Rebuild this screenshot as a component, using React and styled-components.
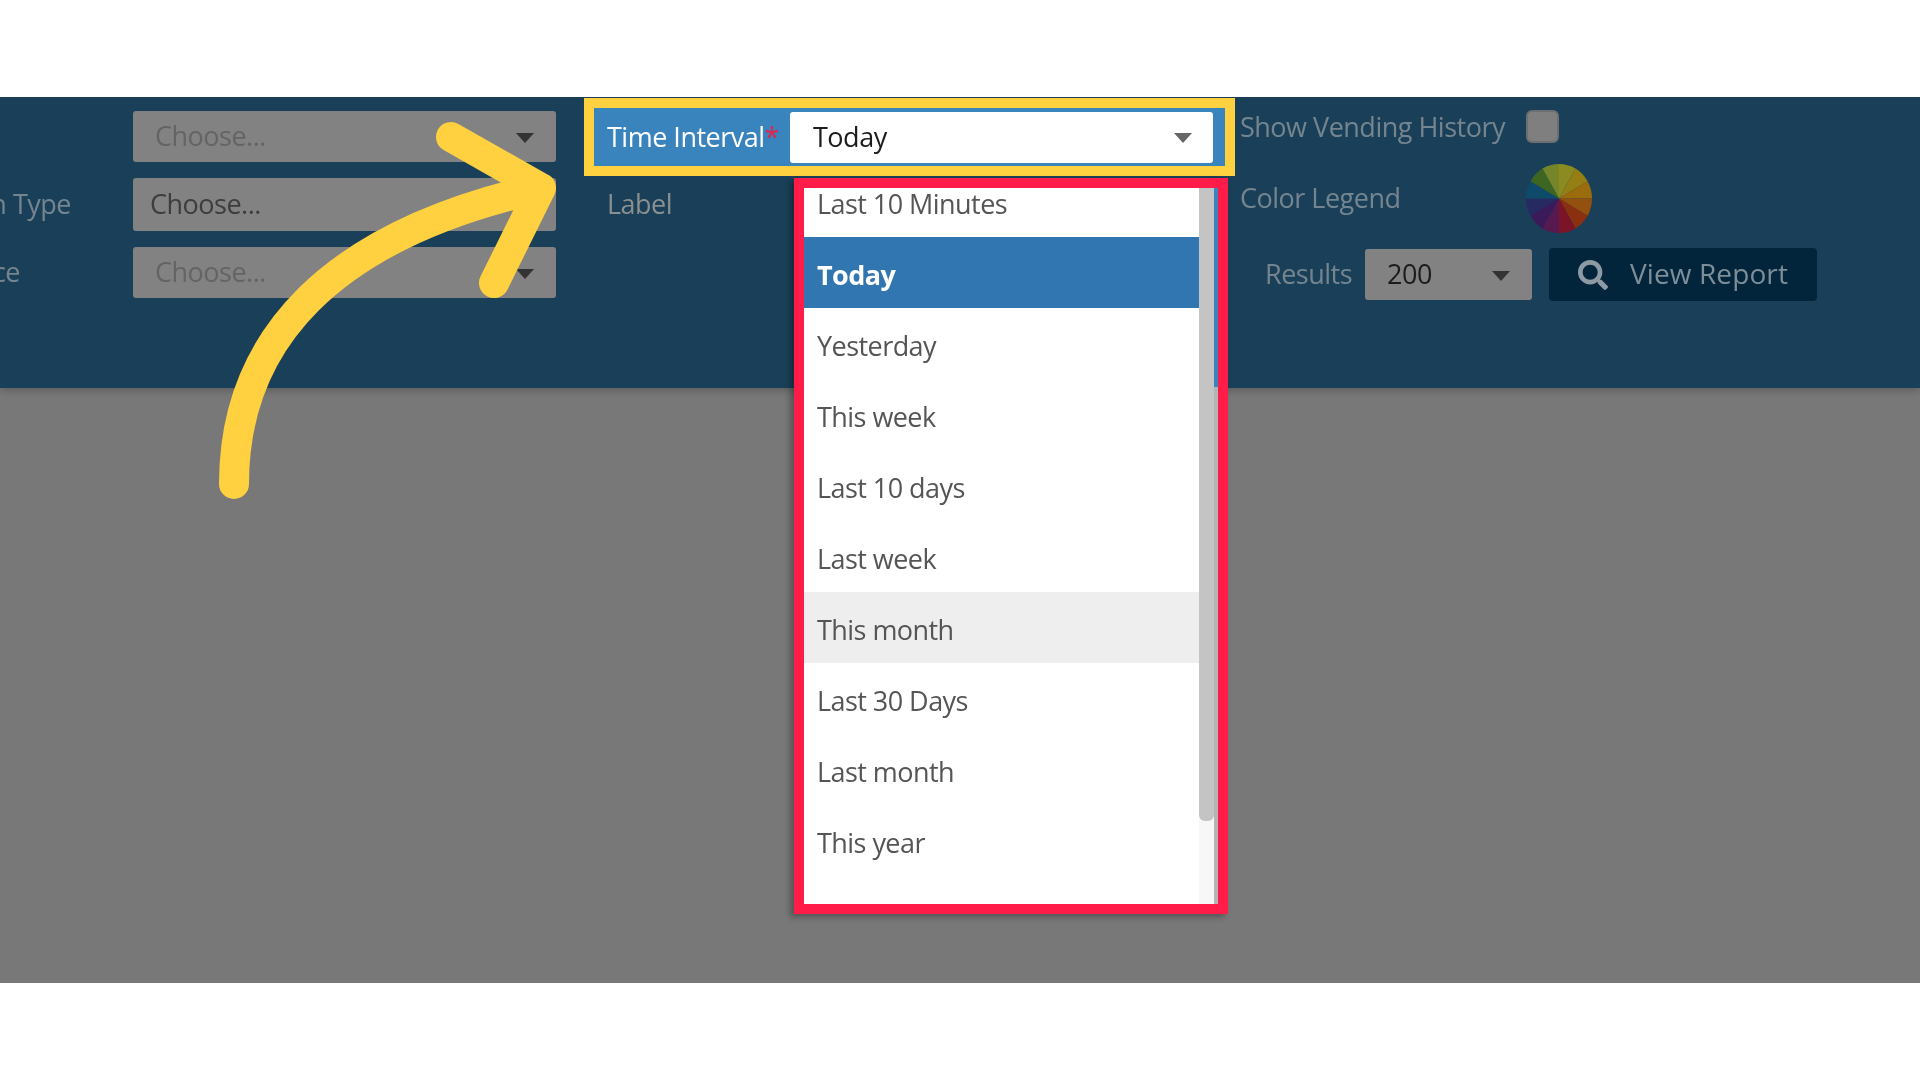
import styled, { createGlobalStyle, css } from "styled-components";
import { FaSearch } from "react-icons/fa";

const GlobalStyle = createGlobalStyle`
  html, body {
    margin: 0;
    padding: 0;
    background: #ffffff;
    font-family: "Open Sans", "Noto Sans", sans-serif;
  }
`;

const OPTIONS = [
  "Last 10 Minutes",
  "Today",
  "Yesterday",
  "This week",
  "Last 10 days",
  "Last week",
  "This month",
  "Last 30 Days",
  "Last month",
  "This year",
  "Custom",
];

const WHEEL = [
  "#8b8b22", "#957f14", "#9a6c0e", "#93500e", "#8a3010", "#7a1426",
  "#561a50", "#3a1a58", "#262a60", "#0e4a6a", "#3c6622", "#75852a",
];

function wedge(i) {
  const step = (Math.PI * 2) / WHEEL.length;
  const a = i * step - Math.PI / 2;
  const b = a + step;
  const p = (t) => `${(33 + 33 * Math.cos(t)).toFixed(2)} ${(33 + 33 * Math.sin(t)).toFixed(2)}`;
  return `M33 33L${p(a)}A33 33 0 0 1 ${p(b)}Z`;
}

function ColorWheel() {
  return (
    <WheelSvg viewBox="0 0 66 66" preserveAspectRatio="none">
      {WHEEL.map((c, i) => (
        <path key={c} d={wedge(i)} fill={c} />
      ))}
    </WheelSvg>
  );
}

function App() {
  return (
    <>
      <GlobalStyle />
      <Stage>
        <Header>
          <LeftColumn>
            <Row>
              <FieldLabel />
              <Select $h={51}>
                <SelectText $pad={22} $dim>Choose...</SelectText>
                <Caret $right={31} />
              </Select>
            </Row>
            <Row>
              <FieldLabel $end={62}>Transaction Type</FieldLabel>
              <Select $h={53}>
                <SelectText $pad={17}>Choose...</SelectText>
              </Select>
            </Row>
            <Row>
              <FieldLabel $end={113}>Device</FieldLabel>
              <Select $h={51}>
                <SelectText $pad={22} $dim>Choose...</SelectText>
                <Caret $right={31} />
              </Select>
            </Row>
          </LeftColumn>

          <MiddleColumn>
            <Highlight>
              <IntervalLabel>
                Time Interval<Required>*</Required>
              </IntervalLabel>
              <IntervalSelect>
                <SelectText $pad={23} $strong>Today</SelectText>
                <Caret $right={30} $light />
              </IntervalSelect>
            </Highlight>
            <PlainLabel>Label</PlainLabel>
          </MiddleColumn>

          <RightColumn>
            <OptionRow $h={57}>
              <OptionLabel>Show Vending History</OptionLabel>
              <Checkbox />
            </OptionRow>
            <OptionRow $h={85}>
              <OptionLabel>Color Legend</OptionLabel>
              <ColorWheel />
            </OptionRow>
            <ResultsRow>
              <ResultsLabel>Results</ResultsLabel>
              <Select $h={51} $w={167}>
                <SelectText $pad={22} $strong>200</SelectText>
                <Caret $right={31} />
              </Select>
              <ReportButton>
                <FaSearch size={30} />
                <span>View Report</span>
              </ReportButton>
            </ResultsRow>
          </RightColumn>
        </Header>

        <Menu>
          <MenuList>
            {OPTIONS.map((o) => (
              <MenuItem key={o} $active={o === "Today"} $hover={o === "This month"}>
                <span>{o}</span>
              </MenuItem>
            ))}
          </MenuList>
          <ScrollTrack>
            <ScrollThumb />
          </ScrollTrack>
          <Gutter />
        </Menu>

        <Arrow viewBox="0 0 600 420" fill="none">
          <path
            d="M234 387C234 243 330 138 541 91M451 40L541 91L494 186"
            stroke="#ffd040"
            strokeWidth="30"
            strokeLinecap="round"
            strokeLinejoin="round"
          />
        </Arrow>
      </Stage>
    </>
  );
}

export default App;

// the reference is an upscaled capture, so its text is a little soft
const uiText = css`
  font-size: 27px;
  letter-spacing: -0.5px;
  white-space: nowrap;
  filter: blur(0.5px);
`;

const Stage = styled.div`
  position: relative;
  margin-top: 97px;
  height: 886px;
  overflow: hidden;
  background: #787878;
  margin-bottom: 97px;
`;

const Header = styled.header`
  display: flex;
  height: 291px;
  background: #1a4059;
  box-shadow: 0 2px 8px rgba(0, 0, 0, 0.25);
`;

const LeftColumn = styled.div`
  width: 555px;
  flex: none;
  padding-top: 14px;
  display: flex;
  flex-direction: column;
  gap: 16px;
`;

const Row = styled.div`
  display: flex;
  align-items: center;
`;

const FieldLabel = styled.div`
  ${uiText}
  width: 133px;
  flex: none;
  box-sizing: border-box;
  display: flex;
  justify-content: flex-end;
  overflow: hidden;
  padding-right: ${(p) => p.$end || 0}px;
  padding-bottom: 3px;
  color: #75858f;
`;

const Select = styled.div`
  position: relative;
  display: flex;
  align-items: center;
  box-sizing: border-box;
  flex: none;
  width: ${(p) => p.$w || 423}px;
  height: ${(p) => p.$h}px;
  background: #828282;
  border-radius: 3px;
`;

const SelectText = styled.span`
  ${uiText}
  padding-left: ${(p) => p.$pad}px;
  padding-bottom: 2px;
  color: ${(p) => (p.$strong ? "#1c1c1c" : p.$dim ? "#646464" : "#3d3d3d")};
`;

const Caret = styled.i`
  position: absolute;
  top: 50%;
  right: ${(p) => p.$right - 9}px;
  margin-top: -4px;
  width: 0;
  height: 0;
  border-left: 9px solid transparent;
  border-right: 9px solid transparent;
  border-top: 10px solid ${(p) => (p.$light ? "#666666" : "#333333")};
`;

const MiddleColumn = styled.div`
  width: 651px;
  flex: none;
  margin-left: 29px;
  padding-top: 1px;
`;

const Highlight = styled.div`
  display: flex;
  align-items: center;
  box-sizing: border-box;
  height: 78px;
  border: 10px solid #ffd040;
  background: #3a84bd;
`;

const IntervalLabel = styled.div`
  ${uiText}
  width: 196px;
  flex: none;
  box-sizing: border-box;
  padding-left: 13px;
  padding-bottom: 2px;
  color: #ffffff;
`;

const Required = styled.span`
  color: #e8214a;
`;

const IntervalSelect = styled.div`
  position: relative;
  display: flex;
  align-items: center;
  width: 423px;
  height: 51px;
  background: #ffffff;
  border-radius: 3px;
`;

const PlainLabel = styled.div`
  ${uiText}
  margin: 10px 0 0 23px;
  line-height: 36px;
  color: #8a8f8f;
`;

const RightColumn = styled.div`
  flex: 1;
  margin-left: 5px;
  padding-top: 2px;
`;

const OptionRow = styled.div`
  display: flex;
  align-items: center;
  height: ${(p) => p.$h}px;
`;

const OptionLabel = styled.div`
  ${uiText}
  width: 286px;
  flex: none;
  padding-bottom: 3px;
  color: #75858f;
`;

const Checkbox = styled.div`
  width: 33px;
  height: 33px;
  box-sizing: border-box;
  background: #7f7f7f;
  border: 2px solid #6b6f72;
  border-radius: 6px;
  margin-top: -3px;
`;

const WheelSvg = styled.svg`
  width: 66px;
  height: 69px;
  display: block;
`;

const ResultsRow = styled.div`
  display: flex;
  align-items: center;
  margin-top: 7px;
  padding-left: 25px;
`;

const ResultsLabel = styled.div`
  ${uiText}
  width: 100px;
  flex: none;
  padding-bottom: 2px;
  color: #75858f;
`;

const ReportButton = styled.div`
  display: flex;
  align-items: center;
  gap: 22px;
  width: 268px;
  height: 53px;
  flex: none;
  box-sizing: border-box;
  margin-left: 17px;
  padding-left: 29px;
  background: #02253b;
  border-radius: 4px;
  color: #7d8e99;

  span {
    ${uiText}
    font-size: 28px;
    letter-spacing: 0.1px;
    padding-bottom: 3px;
  }

  svg {
    color: #8d9aa3;
    filter: blur(0.5px);
  }
`;

const Menu = styled.div`
  position: absolute;
  left: 794px;
  top: 81px;
  width: 434px;
  height: 736px;
  box-sizing: border-box;
  display: flex;
  border: 10px solid #ff1c48;
  box-shadow: -4px 3px 6px rgba(0, 0, 0, 0.3);
`;

const MenuList = styled.div`
  flex: 1;
  overflow: hidden;
  background: #ffffff;
`;

const MenuItem = styled.div`
  display: flex;
  align-items: center;
  box-sizing: border-box;
  height: 71px;
  padding: 3px 0 0 13px;
  color: ${(p) => (p.$active ? "#ffffff" : "#555555")};
  font-weight: ${(p) => (p.$active ? 700 : 400)};
  background: ${(p) => (p.$active ? "#3276b1" : p.$hover ? "#eeeeee" : "transparent")};

  span {
    ${uiText}
    letter-spacing: -0.55px;
  }

  &:first-child {
    margin-top: -22px;
  }
`;

const ScrollTrack = styled.div`
  width: 15px;
  flex: none;
  background: #f7f7f7;
`;

const ScrollThumb = styled.div`
  height: 633px;
  background: #c4c4c4;
  border-radius: 0 0 6px 6px;
`;

const Gutter = styled.div`
  width: 4px;
  flex: none;
  background: linear-gradient(#3a84bd 0 199px, #b4b4b4 199px);
`;

const Arrow = styled.svg`
  position: absolute;
  left: 0;
  top: 0;
  width: 600px;
  height: 420px;
  pointer-events: none;
`;
